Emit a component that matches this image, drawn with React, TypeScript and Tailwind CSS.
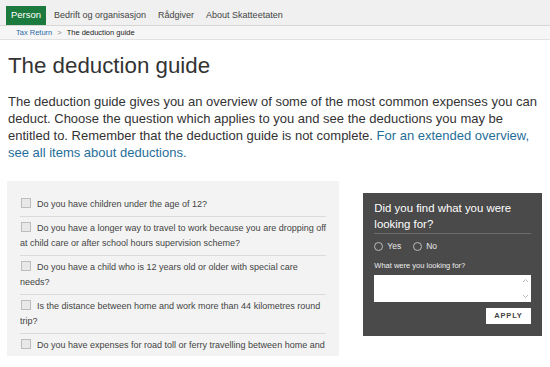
import React from "react";

const items = [
  "Do you have children under the age of 12?",
  "Do you have a longer way to travel to work because you are dropping off at child care or after school hours supervision scheme?",
  "Do you have a child who is 12 years old or older with special care needs?",
  "Is the distance between home and work more than 44 kilometres round trip?",
  "Do you have expenses for road toll or ferry travelling between home and",
];

export default function App() {
  return (
    <div
      className="w-[550px] h-[367px] overflow-hidden bg-white text-[#333]"
      style={{ fontFamily: '"Liberation Sans", Arial, sans-serif' }}
    >
      {/* top nav */}
      <div className="h-[26px] bg-[#f0f0f0] border-b border-[#d6d6d6] flex items-end pl-[6px] text-[9px]">
        <div className="h-[19px] w-[40px] bg-[#1d7a3e] text-white flex items-center justify-center text-[9.5px]">Person</div>
        <div className="h-[19px] ml-[8px] flex items-center text-[#444]">Bedrift og organisasjon</div>
        <div className="h-[19px] ml-[12px] flex items-center text-[#444]">Rådgiver</div>
        <div className="h-[19px] ml-[12px] flex items-center text-[#444]">About Skatteetaten</div>
      </div>
      {/* breadcrumb */}
      <div className="h-[14px] bg-[#f6f6f6] border-b border-[#e2e2e2] flex items-center pl-[16px] text-[7.5px]">
        <span className="text-[#2a6aa6]">Tax Return</span>
        <span className="mx-[5px] text-[#888]">&gt;</span>
        <span className="text-[#222]">The deduction guide</span>
      </div>

      <div className="px-[8px]">
        <h1 className="text-[22.3px] leading-[26px] mt-[13px] text-[#333]">The deduction guide</h1>
        <p className="text-[13px] leading-[17px] mt-[14px] text-[#333] whitespace-nowrap">
          The deduction guide gives you an overview of some of the most common expenses you can
          <br />
          deduct. Choose the question which applies to you and see the deductions you may be
          <br />
          entitled to. Remember that the deduction guide is not complete.{" "}
          <span className="text-[#1f6e9a]">For an extended overview,</span>
          <br />
          <span className="text-[#1f6e9a]">see all items about deductions.</span>
        </p>

        <div className="flex mt-[20px] items-start">
          <div className="w-[335px] h-[175px] overflow-hidden ml-[-1px] bg-[#f3f3f3] pt-[12px] px-[13px]">
            {items.map((t, i) => (
              <div
                key={i}
                className={
                  "py-[4px] text-[9px] leading-[15px] text-[#444] " + (i > 0 ? "border-t border-[#dadada]" : "")
                }
              >
                <span className="inline-block w-[10px] h-[10px] border border-[#bdbdbd] bg-[#e8e8e8] align-[-1px] mr-[6px] ml-[1px]" />
                {t}
              </div>
            ))}
          </div>

          <div className="ml-[24px] mt-[12px] w-[180px] bg-[#4a4a4a] px-[11px] pt-[7px] pb-[12px]">
            <div className="text-[11.4px] leading-[16px] text-white pb-[1px] border-b border-[#6c6c6c]">
              Did you find what you were looking for?
            </div>
            <div className="flex items-center h-[10px] leading-[10px] mt-[7px] text-[8.5px] text-[#e8e8e8]">
              <span className="inline-block w-[9px] h-[9px] rounded-full border border-[#bbb] mr-[4px]" />
              <span>Yes</span>
              <span className="inline-block w-[9px] h-[9px] rounded-full border border-[#bbb] ml-[12px] mr-[4px]" />
              <span>No</span>
            </div>
            <div className="mt-[10px] leading-[10px] text-[7.5px] text-[#eee]">What were you looking for?</div>
            <div className="mt-[4px] h-[27px] bg-white relative">
              <svg className="absolute right-[2px] top-[3px]" width="7" height="5" viewBox="0 0 7 5">
                <path d="M1 4 L3.5 1.5 L6 4" fill="none" stroke="#bbb" strokeWidth="1" />
              </svg>
              <svg className="absolute right-[2px] bottom-[3px]" width="7" height="5" viewBox="0 0 7 5">
                <path d="M1 1 L3.5 3.5 L6 1" fill="none" stroke="#bbb" strokeWidth="1" />
              </svg>
            </div>
            <div className="flex justify-end mt-[6px]">
              <div className="w-[45px] h-[16px] bg-white text-[#444] text-[7.5px] font-bold tracking-[0.8px] flex items-center justify-center">
                APPLY
              </div>
            </div>
          </div>
        </div>
      </div>
    </div>
  );
}
